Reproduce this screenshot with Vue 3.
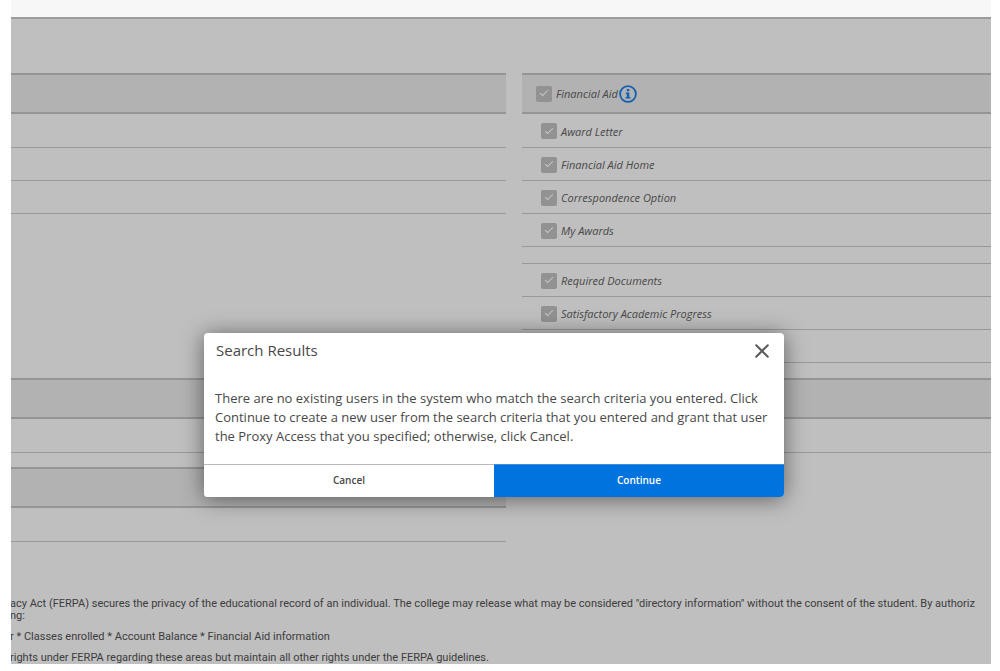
<script setup>
import { ref } from 'vue'

const open = ref(true)
const firstGroup = ['Award Letter', 'Financial Aid Home', 'Correspondence Option', 'My Awards']
const secondGroup = ['Required Documents', 'Satisfactory Academic Progress']
</script>

<template>
  <div class="page">
    <header class="topbar"></header>

    <main class="content">
      <div class="columns">
        <section class="column">
          <div class="upper">
            <div class="heading"></div>
            <div class="row first"></div>
            <div class="row"></div>
            <div class="row"></div>
          </div>
          <div class="heading"></div>
          <div class="row first"></div>
          <div class="heading spaced"></div>
          <div class="row first"></div>
        </section>

        <section class="column">
          <div class="upper">
            <div class="heading">
              <label class="option">
                <input type="checkbox" checked disabled />
                <span>Financial Aid</span>
              </label>
              <button class="info" type="button" aria-label="About Financial Aid">
                <svg viewBox="0 0 18 18" width="18" height="18">
                  <circle cx="9" cy="9" r="7.9" fill="none" stroke="#1260b4" stroke-width="1.8" />
                  <path d="M7.8 4h2.5v2.3H7.8zM6.8 7.4h3.5v4.6h1.1v1.6H6.6V12h1.2V9h-1z" fill="#1260b4" />
                </svg>
              </button>
            </div>
            <div v-for="(name, i) in firstGroup" :key="name" class="row" :class="{ first: i === 0 }">
              <label class="option">
                <input type="checkbox" checked disabled />
                <span>{{ name }}</span>
              </label>
            </div>
            <div class="group">
              <div v-for="name in secondGroup" :key="name" class="row">
                <label class="option">
                  <input type="checkbox" checked disabled />
                  <span>{{ name }}</span>
                </label>
              </div>
              <div class="row"></div>
            </div>
          </div>
          <div class="heading"></div>
          <div class="row first"></div>
        </section>
      </div>

      <footer class="legal">
        <p>acy Act (FERPA) secures the privacy of the educational record of an individual. The college may release what may be considered "directory information" without the consent of the student. By authoriz<br />ng:</p>
        <p>r * Classes enrolled * Account Balance * Financial Aid information</p>
        <p>rights under FERPA regarding these areas but maintain all other rights under the FERPA guidelines.</p>
      </footer>
    </main>

    <div v-if="open" class="dialog" role="dialog" aria-labelledby="dialog-title">
      <div class="dialog-head">
        <h2 id="dialog-title">Search Results</h2>
        <button class="close" type="button" aria-label="Close" @click="open = false">
          <svg viewBox="0 0 14 14" width="14" height="14">
            <path d="M1.2 1.2 12.8 12.8M12.8 1.2 1.2 12.8" stroke="#5b5b5b" stroke-width="2" stroke-linecap="round" />
          </svg>
        </button>
      </div>
      <p class="message">
        There are no existing users in the system who match the search criteria you entered. Click<br />
        Continue to create a new user from the search criteria that you entered and grant that user<br />
        the Proxy Access that you specified; otherwise, click Cancel.
      </p>
      <div class="actions">
        <button class="cancel" type="button" @click="open = false">Cancel</button>
        <button class="continue" type="button" @click="open = false">Continue</button>
      </div>
    </div>
  </div>
</template>

<style>
body {
  background: #fff;
}
</style>

<style scoped>
.page {
  position: relative;
  margin: 0 9px 0 11px;
  font-family: "Open Sans", "Noto Sans", sans-serif;
  font-size: 11px;
  color: #3c3c3c;
}
.topbar {
  height: 17px;
  background: #f7f7f7;
}
.content {
  border-top: 2px solid #9c9c9c;
  background: #bfbfbf;
  padding-top: 54px;
  overflow: hidden;
}
.columns {
  display: grid;
  grid-template-columns: 495fr 469fr;
  column-gap: 16px;
}
.upper {
  min-height: 305px;
}
.heading {
  box-sizing: border-box;
  display: flex;
  align-items: center;
  gap: 1px;
  height: 41px;
  padding-left: 14px;
  border: solid #959595;
  border-width: 2px 0;
  background: #b2b2b2;
}
.heading.spaced {
  margin-top: 14px;
}
.row {
  box-sizing: border-box;
  display: flex;
  align-items: center;
  height: 33px;
  padding: 1px 0 0 19px;
  border-bottom: 1px solid #999;
}
.row.first {
  height: 34px;
}
.group {
  margin-top: 16px;
  border-top: 1px solid #999;
}
.option {
  display: flex;
  align-items: center;
  gap: 4px;
  font-style: italic;
  color: #484848;
}
.option input {
  appearance: none;
  display: grid;
  place-items: center;
  width: 16px;
  height: 16px;
  margin: 0;
  border-radius: 2px;
  background: #929292;
}
.option input::after {
  content: "";
  width: 7px;
  height: 3px;
  margin-bottom: 3px;
  border: solid #c8c8c8;
  border-width: 0 0 1px 1px;
  transform: rotate(-45deg);
}
.info,
.close {
  display: flex;
  padding: 0;
  border: 0;
  background: none;
}
.legal {
  margin: 56px 0 0 -1px;
  font-family: Roboto, "Open Sans", sans-serif;
  line-height: 12px;
  white-space: nowrap;
}
.legal p {
  margin: 0 0 9px;
}
.legal p:last-child {
  margin-bottom: 0;
}
.dialog {
  position: absolute;
  top: 333px;
  left: 193px;
  width: 580px;
  border-radius: 4px;
  background: #fff;
  box-shadow: 0 2px 22px rgba(0, 0, 0, 0.5);
  overflow: hidden;
  color: #484848;
}
.dialog-head {
  display: flex;
  align-items: center;
  justify-content: space-between;
  height: 36px;
  padding: 0 15px 0 12px;
}
.dialog-head h2 {
  margin: 0;
  padding-bottom: 2px;
  font-size: 15px;
  font-weight: 400;
}
.message {
  margin: 0;
  padding: 20px 11px 18px;
  font-size: 13px;
  line-height: 19px;
  white-space: nowrap;
}
.actions {
  display: grid;
  grid-template-columns: 1fr 1fr;
}
.actions button {
  height: 33px;
  padding: 0 0 2px;
  border: 0;
  border-top: 1px solid #b8b8b8;
  background: #fff;
  font-family: inherit;
  font-size: 10px;
  font-weight: 600;
  color: #484848;
}
.actions .continue {
  border-top-color: #3a8fe0;
  background: #0073de;
  color: #fff;
}
</style>
